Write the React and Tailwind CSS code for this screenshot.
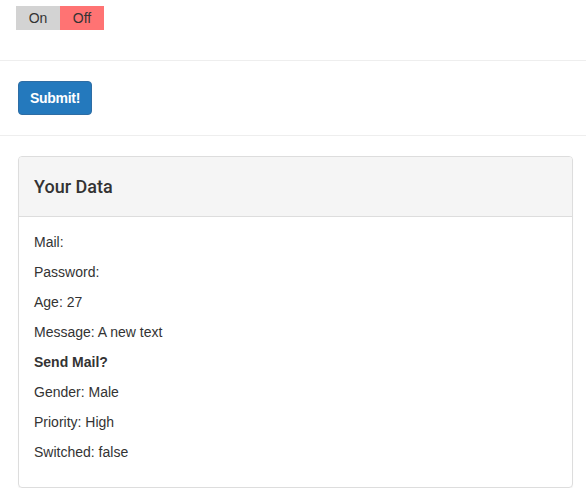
import React from 'react';

const rows = [
  { label: 'Mail:', value: '' },
  { label: 'Password:', value: '' },
  { label: 'Age:', value: '27' },
  { label: 'Message:', value: 'A new text' },
  { label: 'Send Mail?', bold: true },
  { label: 'Gender:', value: 'Male' },
  { label: 'Priority:', value: 'High' },
  { label: 'Switched:', value: 'false' },
];

export default function App() {
  return (
    <div className="bg-white text-[14px] leading-[20px] text-[#333]" style={{ fontFamily: '"Liberation Sans", Arial, sans-serif' }}>
      <div className="pt-[6px] pl-[16px] flex">
        <div className="w-[44px] h-[24px] flex items-center justify-center bg-[#d3d3d3]">On</div>
        <div className="w-[44px] h-[24px] flex items-center justify-center bg-[#ff7373]">Off</div>
      </div>
      <hr className="mt-[30px] border-0 border-t border-[#eee]" />
      <div className="pt-[20px] pl-[18px]">
        <button className="h-[34px] w-[74px] rounded-[4px] border border-[#2e6da4] bg-[#2479bd] text-white font-bold tracking-[-0.3px]">
          Submit!
        </button>
      </div>
      <hr className="mt-[20px] border-0 border-t border-[#eee]" />
      <div className="mt-[20px] ml-[18px] w-[555px] border border-[#ddd] rounded-[4px] shadow-[0_1px_1px_rgba(0,0,0,0.05)]">
        <div className="h-[60px] px-[15px] flex items-center bg-[#f5f5f5] border-b border-[#ddd] rounded-t-[3px]">
          <h3 className="text-[18px] font-medium text-[#333] font-['Roboto',sans-serif]">Your Data</h3>
        </div>
        <div className="p-[15px]">
          {rows.map((r, i) => (
            <p key={i} className={`mb-[10px] ${r.bold ? 'font-bold' : ''}`}>
              {r.label}{r.value ? ` ${r.value}` : ''}
            </p>
          ))}
        </div>
      </div>
    </div>
  );
}
